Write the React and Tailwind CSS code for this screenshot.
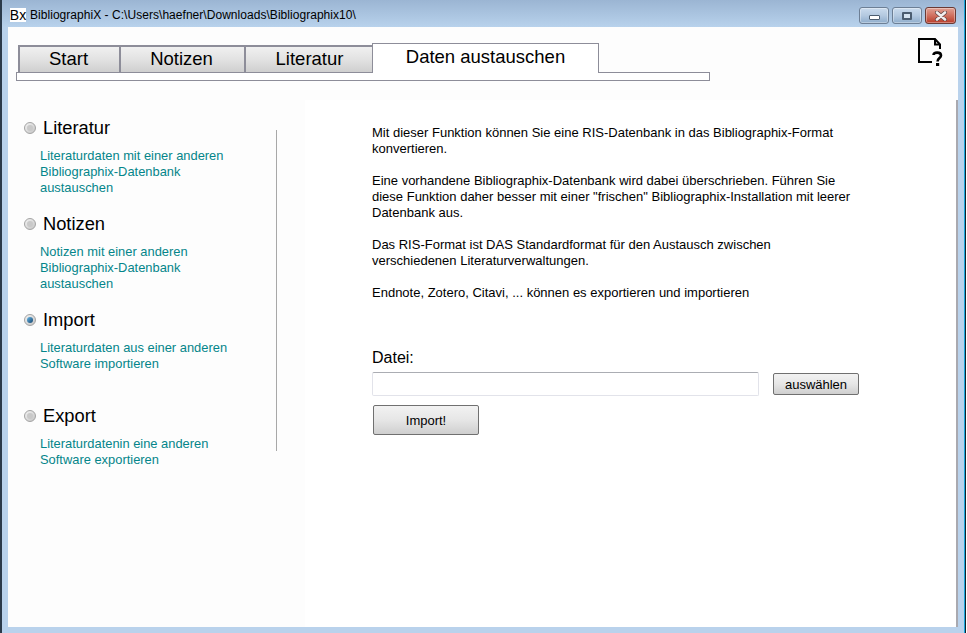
import React from 'react';

const sections = [
  { title: 'Literatur', lines: ['Literaturdaten mit einer anderen', 'Bibliographix-Datenbank', 'austauschen'] },
  { title: 'Notizen', lines: ['Notizen mit einer anderen', 'Bibliographix-Datenbank', 'austauschen'] },
  { title: 'Import', lines: ['Literaturdaten aus einer anderen', 'Software importieren'], checked: true },
  { title: 'Export', lines: ['Literaturdatenin eine anderen', 'Software exportieren'] },
];

const tabs = [
  { label: 'Start', width: 'w-[101px] pr-[2px]' },
  { label: 'Notizen', width: 'w-[125px] pr-[2px]' },
  { label: 'Literatur', width: 'w-[128px] pl-[1px]' },
];

const RadioDot = ({ checked }) => (
  <span className="flex h-[12px] w-[12px] shrink-0 items-center justify-center rounded-full border border-[#a3a3a3] bg-gradient-to-br from-[#f4f4f4] to-[#c4c4c4]">
    {checked ? (
      <span className="h-[6px] w-[6px] rounded-full bg-gradient-to-br from-[#6ab8e8] to-[#14466f]" />
    ) : (
      <span className="h-[6px] w-[6px] rounded-full bg-[#c9c9c9]" />
    )}
  </span>
);

const WinButton = ({ className, children }) => (
  <div className={`flex h-[17px] items-center justify-center rounded-[3px] border shadow-[inset_0_0_0_1px_rgba(255,255,255,0.35)] ${className}`}>
    {children}
  </div>
);

const App = () => {
  return (
    <div className="flex h-[633px] w-[967px] overflow-hidden bg-white font-['Liberation_Sans',Arial,sans-serif] text-black">
      <div className="flex w-[965px] shrink-0 flex-col border-l-2 border-r border-l-[#2b3a4a] border-r-[#19a7dc] bg-[#b9d2ec] px-[6px]">
        {/* title bar */}
        <div className="-mx-[6px] flex h-[27px] shrink-0 items-center bg-gradient-to-b from-[#9bb5d3] to-[#b8d2ec] pl-[8px]">
          <span className="mt-[3px] flex h-[14px] w-[16px] items-center justify-center bg-white text-[14px] leading-none">Bx</span>
          <span className="ml-[4px] mt-[3px] text-[12px] leading-none tracking-[0.04px]">BibliographiX - C:\Users\haefner\Downloads\Bibliographix10\</span>
          <div className="ml-auto mr-[8px] mt-[4px] flex gap-[3px]">
            <WinButton className="w-[30px] border-[#6d7f95] bg-gradient-to-b from-[#cbdcee] via-[#b4c9e0] to-[#8fadcc]">
              <span className="mt-[4px] h-[5px] w-[11px] rounded-[1px] border border-[#4c5d70] bg-white" />
            </WinButton>
            <WinButton className="w-[30px] border-[#6d7f95] bg-gradient-to-b from-[#cbdcee] via-[#b4c9e0] to-[#8fadcc]">
              <span className="h-[8px] w-[10px] rounded-[1px] border-2 border-[#4c5d70] bg-[#d6e3f0]" />
            </WinButton>
            <WinButton className="w-[31px] border-[#6a3a34] bg-gradient-to-b from-[#e0a194] via-[#d0705f] to-[#b83a28]">
              <svg width="14" height="10" viewBox="0 0 14 10">
                <path d="M3 1.5 L11 8.5 M11 1.5 L3 8.5" stroke="#5c4444" strokeWidth="4" strokeLinecap="round" />
                <path d="M3 1.5 L11 8.5 M11 1.5 L3 8.5" stroke="#f2eeee" strokeWidth="2.6" strokeLinecap="round" />
              </svg>
            </WinButton>
          </div>
        </div>

        {/* client area */}
        <div className="flex min-h-0 flex-1 flex-col bg-white">
          <div className="relative h-[73px] shrink-0 bg-[#fdfdfd] pl-[8px] pt-[16px]">
            <div className="flex h-[29px] items-end pl-[2px]">
              {tabs.map((tab) => (
                <div
                  key={tab.label}
                  className={`flex h-[27px] items-center justify-center border-2 border-b-0 border-r-0 border-[#8d8d99] bg-gradient-to-b from-[#f0f0f0] via-[#e2e2e2] to-[#cfcfcf] text-[18.5px] leading-none ${tab.width}`}
                >
                  {tab.label}
                </div>
              ))}
              <div className="relative z-10 -mb-[1px] flex h-[30px] w-[227px] items-center justify-center border border-b-0 border-[#8d8d99] bg-white pb-[2px] text-[18.5px] leading-none">
                Daten austauschen
              </div>
            </div>
            <div className="h-[9px] w-[694px] border border-[#8d8d99] bg-white" />
            {/* help icon */}
            <svg className="absolute right-[14px] top-[11px]" width="26" height="30" viewBox="0 0 26 30" fill="none">
              <path d="M14 24 H1 V1 H17 L22 6.5 V11" stroke="#000" strokeWidth="2" />
              <path d="M17 1 V6.5 H22" stroke="#000" strokeWidth="2" />
              <path d="M15.5 17 C15.8 13.8 23 13.8 23 17.5 C23 20.2 19.6 20 19.6 23.5" stroke="#000" strokeWidth="2.6" />
              <rect x="18" y="25" width="3.2" height="3" fill="#000" />
            </svg>
          </div>

          <div className="flex min-h-0 flex-1">
            {/* left column */}
            <div className="flex w-[297px] shrink-0 bg-[#fdfdfd] pl-[16px] pt-[17px]">
              <div className="w-[252px]">
                {sections.map((section) => (
                  <div key={section.title} className="h-[96px]">
                    <div className="flex h-[22px] items-center gap-[7px]">
                      <RadioDot checked={section.checked} />
                      <span className="pt-px text-[18.3px] leading-none">{section.title}</span>
                    </div>
                    <div className="ml-[16px] mt-[9px] text-[12.9px] leading-[16px] text-[#04858a]">
                      {section.lines.map((line) => (
                        <div key={line}>{line}</div>
                      ))}
                    </div>
                  </div>
                ))}
              </div>
              <div className="mt-[13px] h-[321px] w-px bg-[#a8a8a8]" />
            </div>

            {/* right column */}
            <div className="flex-1 border-r-2 border-[#a9a9b0] pl-[67px] pt-[25px]">
              <div className="whitespace-nowrap text-[13px] leading-[16px]">
                <p className="mb-4">
                  Mit dieser Funktion können Sie eine RIS-Datenbank in das Bibliographix-Format
                  <br />
                  konvertieren.
                </p>
                <p className="mb-4">
                  Eine vorhandene Bibliographix-Datenbank wird dabei überschrieben. Führen Sie
                  <br />
                  diese Funktion daher besser mit einer "frischen" Bibliographix-Installation mit leerer
                  <br />
                  Datenbank aus.
                </p>
                <p className="mb-4">
                  Das RIS-Format ist DAS Standardformat für den Austausch zwischen
                  <br />
                  verschiedenen Literaturverwaltungen.
                </p>
                <p>Endnote, Zotero, Citavi, ... können es exportieren und importieren</p>
              </div>

              <div className="mt-[48px] text-[16px] leading-[18px]">Datei:</div>
              <div className="mt-[5px] flex items-center">
                <div className="h-[24px] w-[387px] rounded-[2px] border border-[#e2e3ea] border-t-[#abadb3] bg-white" />
                <button className="ml-[14px] h-[22px] w-[86px] rounded-[2px] border border-[#707070] bg-gradient-to-b from-[#f2f2f2] via-[#e6e6e6] to-[#cfcfcf] text-[13px] leading-none">
                  auswählen
                </button>
              </div>
              <button className="ml-px mt-[9px] block h-[30px] w-[106px] rounded-[2px] border border-[#707070] bg-gradient-to-b from-[#f2f2f2] via-[#e6e6e6] to-[#cfcfcf] pt-px text-[13px] leading-none">
                Import!
              </button>
            </div>
          </div>
        </div>
        <div className="-mx-[6px] h-[6px] shrink-0 bg-[#b9d2ec]" />
      </div>
      <div className="w-px shrink-0 bg-[#14202b]" />
    </div>
  );
};

export default App;
